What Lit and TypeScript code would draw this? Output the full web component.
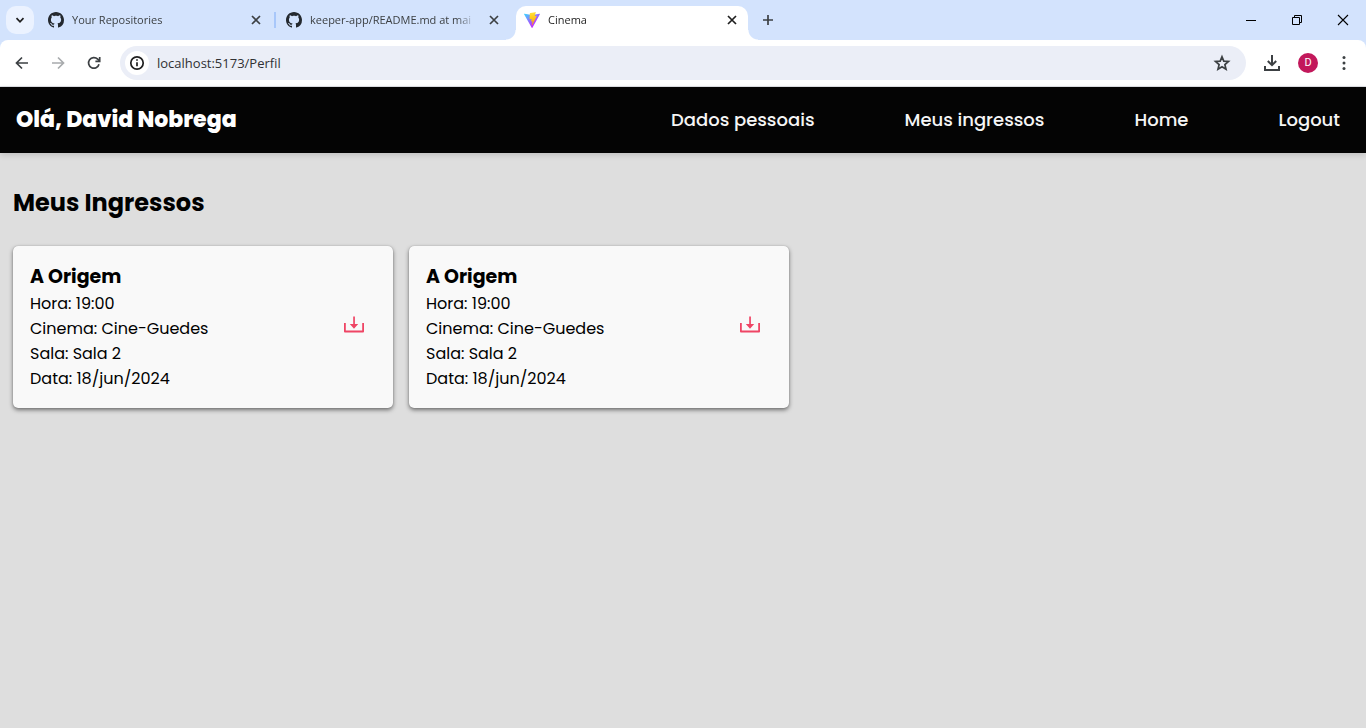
import { LitElement, html, svg, css } from "lit";
import { customElement } from "lit/decorators.js";
import { classMap } from "lit/directives/class-map.js";

const github = html`<svg width="16" height="16" viewBox="0 0 16 16" aria-hidden="true">
  <path fill="#24292f" d="M8 0C3.58 0 0 3.58 0 8c0 3.54 2.29 6.53 5.47 7.59.4.07.55-.17.55-.38 0-.19-.01-.82-.01-1.49-2.01.37-2.53-.49-2.69-.94-.09-.23-.48-.94-.82-1.13-.28-.15-.68-.52-.01-.53.63-.01 1.08.58 1.23.82.72 1.21 1.87.87 2.33.66.07-.52.28-.87.51-1.07-1.78-.2-3.64-.89-3.64-3.95 0-.87.31-1.59.82-2.15-.08-.2-.36-1.02.08-2.12 0 0 .67-.21 2.2.82.64-.18 1.32-.27 2-.27s1.36.09 2 .27c1.53-1.04 2.2-.82 2.2-.82.44 1.1.16 1.92.08 2.12.51.56.82 1.27.82 2.15 0 3.07-1.87 3.75-3.65 3.95.29.25.54.73.54 1.48 0 1.07-.01 1.93-.01 2.2 0 .21.15.46.55.38A8.01 8.01 0 0 0 16 8c0-4.42-3.58-8-8-8z"/>
</svg>`;

const vite = html`<svg width="16" height="16" viewBox="0 0 256 257" aria-hidden="true">
  <defs>
    <linearGradient id="va" x1="-.828%" x2="57.636%" y1="7.652%" y2="78.411%"><stop offset="0%" stop-color="#41D1FF"/><stop offset="100%" stop-color="#BD34FE"/></linearGradient>
    <linearGradient id="vb" x1="43.376%" x2="50.316%" y1="2.242%" y2="89.03%"><stop offset="0%" stop-color="#FFEA83"/><stop offset="8.333%" stop-color="#FFDD35"/><stop offset="100%" stop-color="#FFA800"/></linearGradient>
  </defs>
  <path fill="url(#va)" d="M255.153 37.938L134.897 252.976c-2.483 4.44-8.862 4.466-11.382.048L.875 37.958c-2.746-4.814 1.371-10.646 6.827-9.67l120.385 21.517a6.537 6.537 0 0 0 2.322-.004l117.867-21.483c5.438-.991 9.574 4.796 6.877 9.62Z"/>
  <path fill="url(#vb)" d="M185.432.063L96.44 17.501a3.268 3.268 0 0 0-2.634 3.014l-5.474 92.456a3.268 3.268 0 0 0 3.997 3.378l24.777-5.718c2.318-.535 4.413 1.507 3.936 3.838l-7.361 36.047c-.495 2.426 1.782 4.5 4.151 3.78l15.304-4.649c2.372-.72 4.652 1.36 4.15 3.788l-11.698 56.621c-.732 3.542 3.979 5.473 5.943 2.437l1.313-2.028l72.516-144.72c1.215-2.423-.88-5.186-3.54-4.672l-25.505 4.922c-2.396.462-4.435-1.77-3.759-4.114l16.646-57.705c.677-2.35-1.37-4.583-3.769-4.113Z"/>
</svg>`;

const shapes = {
  close: svg`<path d="M6 6l8 8M14 6l-8 8"/>`,
  chevron: svg`<path d="M6.5 8.2l3.5 3.6 3.5-3.6"/>`,
  plus: svg`<path d="M10 5v10M5 10h10"/>`,
  back: svg`<path d="M16 10H5M10 4.500l-5.500 5.500 5.500 5.500"/>`,
  forward: svg`<path d="M4 10h11M10 4.500l5.500 5.500-5.500 5.500"/>`,
  reload: svg`<path d="M15 11.200A5.300 5.300 0 1 1 13.700 6.200L15.200 7.700"/><path d="M15.700 4v4.300h-4.300"/>`,
  info: svg`<circle cx="10" cy="10" r="6.200"/><path d="M10 9.200v4M10 6.300v1.500"/>`,
  star: svg`<path d="M10 3.800l1.800 4.300 4.700.4-3.600 3.100 1.100 4.600-4-2.500-4 2.500 1.100-4.600-3.600-3.100 4.700-.4z"/>`,
  minimise: svg`<path stroke-width="1" d="M5 10.500h10"/>`,
  restore: svg`<path stroke-width="1" d="M5.500 7.500h7v7h-7zM7.500 7.500v-2h7v7h-2"/>`,
  exit: svg`<path stroke-width="1.1" d="M5 5l10 10M15 5L5 15"/>`,
  dots: svg`<g fill="currentColor" stroke="none"><circle cx="10" cy="4.500" r="1.500"/><circle cx="10" cy="10" r="1.500"/><circle cx="10" cy="15.500" r="1.500"/></g>`,
  download: svg`<path stroke-width="2" d="M10 2v9.500M5.800 8l4.200 4.200L14.200 8M3 13v4h14v-4"/>`,
};

const icon = (name: keyof typeof shapes) => html`<svg width="20" height="20" viewBox="0 0 20 20"
  fill="none" stroke="currentColor" stroke-width="1.7" aria-hidden="true">${shapes[name]}</svg>`;

const tabs = [
  { title: "Your Repositories", mark: github, active: false },
  { title: "keeper-app/README.md at mai", mark: github, active: false },
  { title: "Cinema", mark: vite, active: true },
];

@customElement("browser-frame")
export class BrowserFrame extends LitElement {
  static styles = css`
    :host { display: block; background: #d3e3fd; color: #3c4043; font-family: "Open Sans", "Noto Sans", sans-serif; }
    button { border: 0; padding: 0; background: none; color: inherit; font: inherit; display: flex; align-items: center; justify-content: center; }
    svg { flex: none; display: block; }
    .strip { display: flex; height: 40px; align-items: center; }
    .search { width: 28px; height: 28px; margin: 0 6px; border-radius: 10px; background: #ebf2ff; color: #1f1f1f; }
    .tabs { display: flex; gap: 6px; height: 100%; align-items: flex-end; }
    .tab { position: relative; box-sizing: border-box; display: flex; align-items: center; gap: 8px; width: 232px; height: 34px; padding: 0 6px 6px 8px; font-size: 11px; line-height: 18px; }
    .tab:first-child::after { content: ""; position: absolute; right: -4px; top: 6px; width: 2px; height: 16px; background: #a8c7fa; }
    .title { flex: 1; min-width: 0; overflow: hidden; white-space: nowrap; mask-image: linear-gradient(to right, #000 calc(100% - 20px), transparent); }
    .tab button { width: 20px; height: 20px; }
    .active { background: #fff; color: #1f1f1f; border-radius: 10px 10px 0 0; }
    .active::before, .active::after { content: ""; position: absolute; bottom: 0; width: 10px; height: 10px; }
    .active::before { right: 100%; background: radial-gradient(circle at 0 0, transparent 9px, #fff 10px); }
    .active::after { left: 100%; background: radial-gradient(circle at 100% 0, transparent 9px, #fff 10px); }
    .new { width: 28px; height: 28px; margin-left: 6px; }
    .window { display: flex; margin-left: auto; color: #000; }
    .window button { width: 46px; height: 40px; }
    .bar { display: flex; align-items: center; gap: 2px; box-sizing: border-box; height: 47px; padding: 0 5px; background: #fff; border-bottom: 1px solid #dfe1e5; border-radius: 8px 8px 0 0; }
    .bar > button { width: 34px; height: 34px; }
    .bar > .disabled { color: #a8abad; }
    .address { flex: 1; display: flex; align-items: center; height: 34px; margin: 0 7px; padding: 0 14px 0 5px; border-radius: 17px; background: #ebeef7; }
    .info { width: 24px; height: 24px; border-radius: 12px; background: #fff; color: #1f1f1f; }
    input { flex: 1; min-width: 0; border: 0; padding: 0; margin: 0 8px; background: none; outline: none; font: inherit; font-size: 13px; line-height: 20px; color: #303134; }
    .avatar { display: flex; align-items: center; justify-content: center; width: 20px; height: 20px; border-radius: 10px; background: #c2185b; color: #fff; font: 11px/20px Roboto, sans-serif; }
  `;

  render() {
    return html`
      <div class="strip">
        <button class="search" aria-label="Pesquisar guias">${icon("chevron")}</button>
        <div class="tabs">
          ${tabs.map((t) => html`<div class=${classMap({ tab: true, active: t.active })}>
            ${t.mark}<span class="title">${t.title}</span>
            <button aria-label="Fechar">${icon("close")}</button>
          </div>`)}
        </div>
        <button class="new" aria-label="Nova guia">${icon("plus")}</button>
        <div class="window">
          <button aria-label="Minimizar">${icon("minimise")}</button>
          <button aria-label="Restaurar">${icon("restore")}</button>
          <button aria-label="Fechar janela">${icon("exit")}</button>
        </div>
      </div>
      <div class="bar">
        <button aria-label="Voltar">${icon("back")}</button>
        <button class="disabled" aria-label="Avançar">${icon("forward")}</button>
        <button aria-label="Recarregar">${icon("reload")}</button>
        <div class="address">
          <button class="info" aria-label="Informações do site">${icon("info")}</button>
          <input type="text" aria-label="Endereço" .value=${"localhost:5173/Perfil"} />
          <button aria-label="Favoritar">${icon("star")}</button>
        </div>
        <button aria-label="Downloads">${icon("download")}</button>
        <button aria-label="Perfil"><span class="avatar">D</span></button>
        <button aria-label="Menu">${icon("dots")}</button>
      </div>
    `;
  }
}

const tickets = [
  { movie: "A Origem", time: "19:00", cinema: "Cine-Guedes", room: "Sala 2", date: "18/jun/2024" },
  { movie: "A Origem", time: "19:00", cinema: "Cine-Guedes", room: "Sala 2", date: "18/jun/2024" },
];

@customElement("app-root")
export class AppRoot extends LitElement {
  static styles = css`
    :host { display: flex; flex-direction: column; min-height: 100vh; background: #dedede; color: #000; font-family: Poppins, Inter, sans-serif; }
    h1, h2, h3, p { margin: 0; }
    .header { display: flex; align-items: center; justify-content: space-between; height: 66px; padding: 0 26px 0 16px; background: #040404; box-shadow: 0 2px 6px rgba(0, 0, 0, 0.14); }
    h1 { color: #fff; font-size: 22px; line-height: 36px; font-weight: 800; }
    nav { display: flex; gap: 90px; }
    nav a { color: #f5f5f5; font-size: 18px; line-height: 28px; font-weight: 500; text-decoration: none; }
    main { padding: 32px 13px; }
    h2 { font-size: 24px; line-height: 36px; font-weight: 700; }
    .list { display: flex; flex-wrap: wrap; gap: 16px; margin-top: 25px; }
    .card { box-sizing: border-box; display: flex; align-items: center; justify-content: space-between; width: 380px; padding: 16px 27px 17px 17px; background: #f9f9f9; border-radius: 5px; box-shadow: 0 2px 4px rgba(0, 0, 0, 0.5), 0 0 1px rgba(0, 0, 0, 0.3); }
    h3 { font-size: 19px; line-height: 29px; font-weight: 700; }
    p { font-size: 16px; line-height: 25px; }
    .save { border: 0; padding: 0; background: none; color: #ef4565; }
    .save svg { display: block; }
  `;

  render() {
    return html`
      <browser-frame></browser-frame>
      <header class="header">
        <h1>Olá, David Nobrega</h1>
        <nav>
          <a href="#dados">Dados pessoais</a>
          <a href="#ingressos">Meus ingressos</a>
          <a href="#home">Home</a>
          <a href="#logout">Logout</a>
        </nav>
      </header>
      <main id="ingressos">
        <h2>Meus Ingressos</h2>
        <div class="list">
          ${tickets.map((t) => html`<article class="card">
            <div>
              <h3>${t.movie}</h3>
              <p>Hora: ${t.time}</p>
              <p>Cinema: ${t.cinema}</p>
              <p>Sala: ${t.room}</p>
              <p>Data: ${t.date}</p>
            </div>
            <button class="save" aria-label="Baixar ingresso">
              <svg width="24" height="24" viewBox="0 0 24 24" aria-hidden="true">
                <path fill="none" stroke="currentColor" stroke-width="1.800" stroke-linejoin="round" d="M2.900 8v8.500h18.200V8"/>
                <path fill="currentColor" d="M11.200 1.500h1.700v7.500h3.300L12 13.700 7.800 9h3.400z"/>
              </svg>
            </button>
          </article>`)}
        </div>
      </main>
    `;
  }
}
